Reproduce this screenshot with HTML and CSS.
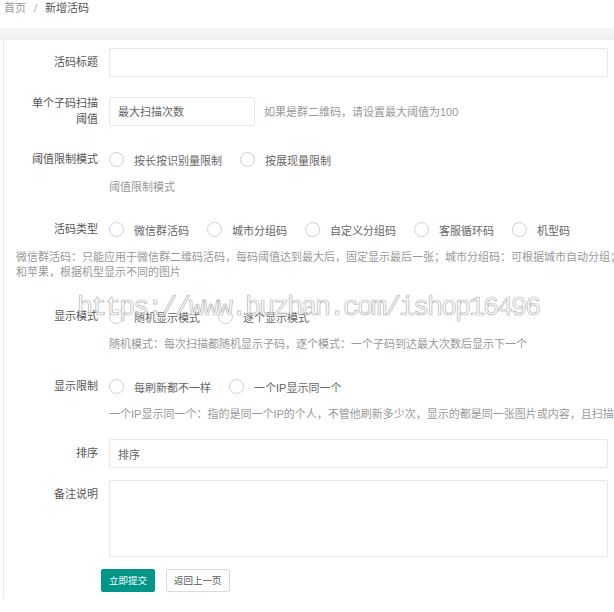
FILE: index.html
```html
<!DOCTYPE html>
<html lang="zh-CN">
<head>
  <meta charset="UTF-8">
  <meta name="viewport" content="width=device-width, initial-scale=1.0">
  <title>新增活码</title>
  <link rel="stylesheet" href="styles.css">
</head>
<body>
  <div class="crumb">
    <a href="#">首页</a><span class="sep">/</span><cite>新增活码</cite>
  </div>
  <div class="band"></div>

  <form class="card">
    <div class="form-item">
      <label class="form-label">活码标题</label>
      <div class="input-block"><input class="input" type="text"></div>
    </div>

    <div class="form-item">
      <label class="form-label">单个子码扫描阈值</label>
      <div class="input-block inline">
        <input class="input input-short" type="text" value="最大扫描次数">
        <span class="aux">如果是群二维码，请设置最大阈值为100</span>
      </div>
    </div>

    <div class="form-item">
      <label class="form-label">阈值限制模式</label>
      <div class="input-block">
        <div class="radios">
          <span class="radio"><i class="radio-icon"></i>按长按识别量限制</span>
          <span class="radio"><i class="radio-icon"></i>按展现量限制</span>
        </div>
        <div class="form-help">阈值限制模式</div>
      </div>
    </div>

    <div class="form-item tight">
      <label class="form-label">活码类型</label>
      <div class="input-block">
        <div class="radios">
          <span class="radio"><i class="radio-icon"></i>微信群活码</span>
          <span class="radio"><i class="radio-icon"></i>城市分组码</span>
          <span class="radio"><i class="radio-icon"></i>自定义分组码</span>
          <span class="radio"><i class="radio-icon"></i>客服循环码</span>
          <span class="radio"><i class="radio-icon"></i>机型码</span>
        </div>
      </div>
    </div>
    <div class="wide-help">微信群活码：只能应用于微信群二维码活码，每码阈值达到最大后，固定显示最后一张；城市分组码：可根据城市自动分组；机型码：区分安卓<br>和苹果，根据机型显示不同的图片</div>

    <div class="form-item">
      <label class="form-label">显示模式</label>
      <div class="input-block">
        <div class="radios">
          <span class="radio"><i class="radio-icon"></i>随机显示模式</span>
          <span class="radio"><i class="radio-icon"></i>逐个显示模式</span>
        </div>
        <div class="form-help">随机模式：每次扫描都随机显示子码，逐个模式：一个子码到达最大次数后显示下一个</div>
      </div>
    </div>

    <div class="form-item">
      <label class="form-label">显示限制</label>
      <div class="input-block">
        <div class="radios">
          <span class="radio"><i class="radio-icon"></i>每刷新都不一样</span>
          <span class="radio"><i class="radio-icon"></i>一个IP显示同一个</span>
        </div>
        <div class="form-help short">一个IP显示同一个：指的是同一个IP的个人，不管他刷新多少次，显示的都是同一张图片或内容，且扫描次数累计</div>
      </div>
    </div>

    <div class="form-item">
      <label class="form-label">排序</label>
      <div class="input-block"><input class="input" type="text" value="排序"></div>
    </div>

    <div class="form-item">
      <label class="form-label">备注说明</label>
      <div class="input-block"><textarea class="textarea"></textarea></div>
    </div>

    <div class="form-actions">
      <button type="button" class="btn btn-primary">立即提交</button>
      <button type="button" class="btn btn-default">返回上一页</button>
    </div>
  </form>

  <div class="watermark">https://www.buzhan.com/ishop16496</div>
</body>
</html>
```

FILE: styles.css
```css
html, body {
  margin: 0;
  padding: 0;
  overflow: hidden;
}

body {
  position: relative;
  background: #fff;
  font-family: "Liberation Sans", "Noto Sans CJK SC", sans-serif;
  font-size: 11px;
  color: #666;
}

/* breadcrumb */
.crumb {
  height: 28px;
  line-height: 16px;
  padding-left: 4px;
}

.crumb a {
  color: #999;
  text-decoration: none;
}

.crumb .sep {
  margin: 0 8px;
  color: #aaa;
}

.crumb cite {
  font-style: normal;
  color: #555;
}

.band {
  height: 12px;
  background: linear-gradient(#f6f7f7, #eeefef);
}

/* form card */
.card {
  margin: 0 0 0 3px;
  padding: 8px 0 7px;
  border-left: 1px solid #e6e6e6;
}

.form-item {
  display: flex;
  margin-bottom: 12px;
}

.form-item.tight {
  margin-bottom: 6px;
}

.form-label {
  flex-shrink: 0;
  box-sizing: border-box;
  width: 105px;
  padding: 6px 11px 6px 25px;
  line-height: 16px;
  text-align: right;
  color: #555;
}

.input-block {
  flex: 1;
  min-width: 0;
  margin-right: 6px;
}

.input-block.inline {
  display: flex;
  align-items: center;
}

.input,
.textarea {
  display: block;
  box-sizing: border-box;
  width: 100%;
  border: 1px solid #e6e6e6;
  border-radius: 2px;
  background: #fff;
  font-family: inherit;
  font-size: 11px;
  color: #666;
  outline: none;
}

.input {
  height: 29px;
  padding: 0 8px;
}

.input-short {
  width: 146px;
}

.textarea {
  height: 77px;
  padding: 6px 8px;
  resize: none;
}

.aux {
  margin-left: 9px;
  color: #999;
  white-space: nowrap;
}

/* radio groups */
.radios {
  display: flex;
  align-items: center;
  height: 29px;
  white-space: nowrap;
}

.radio {
  display: inline-flex;
  align-items: center;
  margin-right: 18px;
  color: #666;
}

.radio-icon {
  box-sizing: border-box;
  width: 15px;
  height: 15px;
  margin-right: 10px;
  border: 1px solid #cfcfcf;
  border-radius: 50%;
  background: #fff;
}

.form-help {
  margin-top: 5px;
  padding-bottom: 8px;
  line-height: 16px;
  color: #999;
  white-space: nowrap;
}

.form-help.short {
  padding-bottom: 5px;
}

.wide-help {
  margin-bottom: 22px;
  padding-left: 12px;
  line-height: 15px;
  color: #999;
  white-space: nowrap;
}

/* buttons */
.form-actions {
  display: flex;
  gap: 11px;
  padding-left: 97px;
}

.btn {
  height: 23px;
  padding: 0 7px;
  border-radius: 2px;
  font-family: inherit;
  font-size: 9.5px;
  line-height: 21px;
  cursor: pointer;
}

.btn-primary {
  border: 1px solid #009688;
  background: #009688;
  color: #fff;
}

.btn-default {
  border: 1px solid #d9d9d9;
  background: #fff;
  color: #555;
}

/* site stamp across the form */
.watermark {
  position: absolute;
  top: 292px;
  left: 77px;
  font-family: "Liberation Mono", monospace;
  font-size: 27px;
  line-height: 32px;
  letter-spacing: -2.2px;
  color: rgba(255, 255, 255, 0.6);
  -webkit-text-stroke: 0.7px #b5b5b5;
  white-space: nowrap;
  pointer-events: none;
}
```
